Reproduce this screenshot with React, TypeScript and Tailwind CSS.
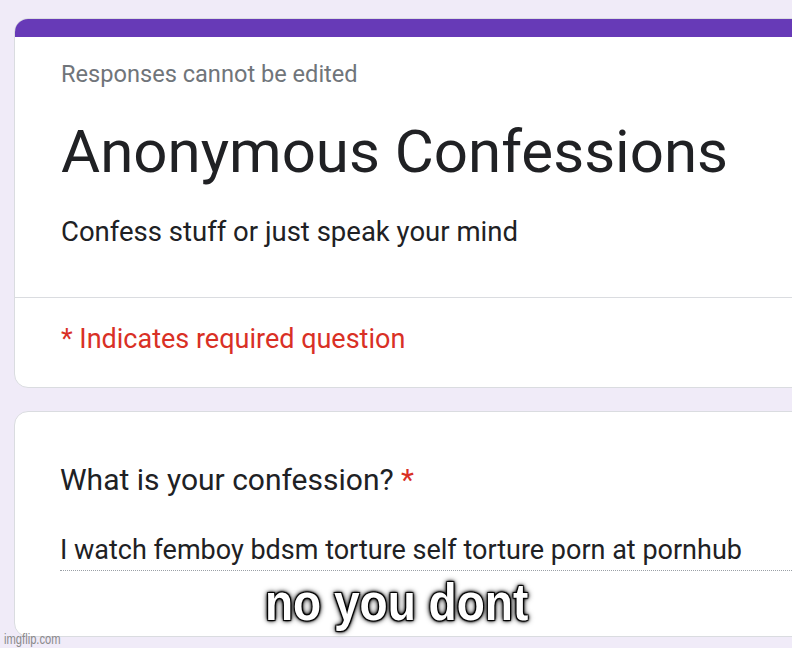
export default function App() {
  return (
    <div className="relative w-[792px] h-[648px] overflow-hidden bg-[#f0ebf8] font-['Roboto','Liberation_Sans',sans-serif]">
      <div className="flex flex-col gap-[23px] pl-[14px] pt-[18px]">
        {/* header card */}
        <div className="w-[840px] h-[370px] bg-white rounded-[14px] border border-[#dadce0] overflow-hidden flex flex-col">
          <div className="h-[18px] bg-[#673ab7] shrink-0" />
          <div className="px-[46px] pt-[23px] pb-[49px]">
            <div className="text-[23.6px] leading-[28px] text-[#70757a]">Responses cannot be edited</div>
            <div className="mt-[28px] text-[60px] leading-[72px] text-[#202124]">Anonymous Confessions</div>
            <div className="mt-[28px] text-[27.5px] leading-[32px] text-[#202124]">Confess stuff or just speak your mind</div>
          </div>
          <div className="h-px bg-[#dadce0] shrink-0" />
          <div className="px-[46px] pt-[25px] text-[27px] leading-[32px] text-[#d93025]">* Indicates required question</div>
        </div>

        {/* question card */}
        <div className="w-[840px] h-[226px] bg-white rounded-[14px] border border-[#dadce0] px-[45px] pt-[50px]">
          <div className="text-[30px] leading-[36px] text-[#202124]">
            What is your confession? <span className="text-[#d93025]">*</span>
          </div>
          <div className="mt-[36px] pb-[4px] border-b border-dotted border-[#9aa0a6] text-[27px] leading-[32px] text-[#202124]">
            I watch femboy bdsm torture self torture porn at pornhub
          </div>
        </div>
      </div>

      <div className="absolute left-[265px] top-[576px] origin-left scale-x-[0.885] font-['Liberation_Sans',Arial,sans-serif] font-bold text-[52px] leading-[52px] text-white whitespace-nowrap [text-shadow:1px_1px_1px_#000,-1px_-1px_1px_#000,1px_-1px_1px_#000,-1px_1px_1px_#000,0_0_3px_#000,0_0_5px_#000,0_0_7px_#000]">
        no you dont
      </div>

      <div className="absolute left-[4px] top-[631px] origin-left scale-x-[0.8] font-['Liberation_Sans',Arial,sans-serif] text-[14px] leading-[16px] text-[#8a8a8a] whitespace-nowrap">
        imgflip.com
      </div>
    </div>
  );
}
